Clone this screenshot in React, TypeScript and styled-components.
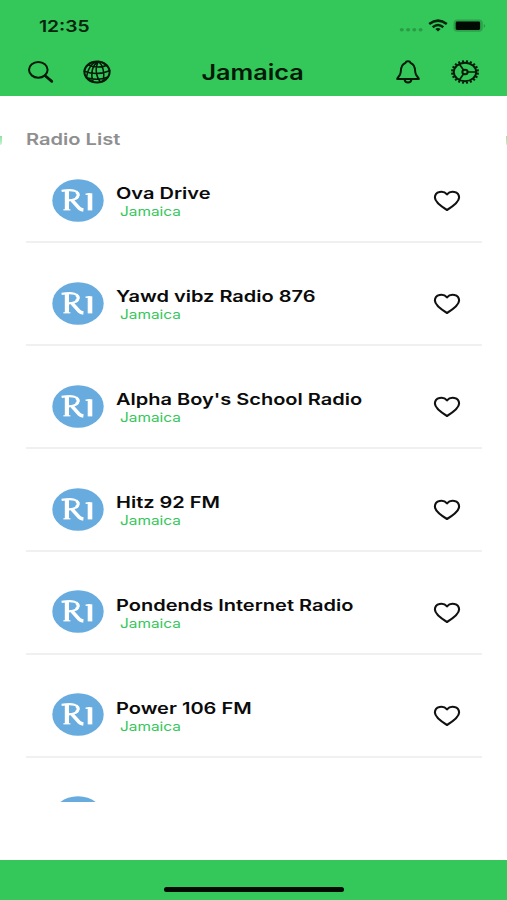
import React from "react";
import styled, { createGlobalStyle } from "styled-components";

const GlobalStyle = createGlobalStyle`
  * { box-sizing: border-box; }
  body {
    margin: 0;
    background: #fff;
    font-family: Inter, "Liberation Sans", sans-serif;
    color: #0b0b0b;
  }
`;

const Screen = styled.div`
  width: 507px;
  height: 900px;
  display: flex;
  flex-direction: column;
  overflow: hidden;
  background: #fff;
`;

const Header = styled.header`
  height: 96px;
  flex: none;
  background: #34c759;
  color: #04240c;
`;

const StatusBar = styled.div`
  height: 50px;
  padding: 2px 20px 0 39px;
  display: flex;
  align-items: center;
  justify-content: space-between;
`;

const Wide = styled.span<{ $scale?: number; $origin?: string }>`
  display: inline-block;
  white-space: nowrap;
  transform: scaleX(${(p) => p.$scale ?? 1.2});
  transform-origin: ${(p) => p.$origin ?? "left center"};
`;

const Clock = styled.div`
  font-size: 16px;
  line-height: 20px;
  font-weight: 600;
`;

const StatusIcons = styled.svg`
  display: block;
  width: 88px;
  height: 18px;
`;

const NavBar = styled.nav`
  height: 46px;
  padding: 0 27px 0 26px;
  display: grid;
  grid-template-columns: 100px 1fr 100px;
  align-items: center;
`;

const NavGroup = styled.div<{ $end?: boolean }>`
  display: flex;
  gap: ${(p) => (p.$end ? "27.5px" : "26px")};
  align-items: center;
  justify-content: ${(p) => (p.$end ? "flex-end" : "flex-start")};
`;

const NavIcon = styled.svg`
  display: block;
  flex: none;
  width: 30px;
  height: 26px;
  margin-top: -2px;
  fill: none;
  stroke: #031a08;
  stroke-width: 2;
  stroke-linecap: round;
  stroke-linejoin: round;
`;

const Title = styled.h1`
  margin: 0;
  font-size: 21px;
  line-height: 26px;
  font-weight: 600;
  text-align: center;
  color: #031a08;
`;

const Heading = styled.div`
  height: 62.4px;
  flex: none;
  display: flex;
  justify-content: space-between;
  padding-top: 33px;
`;

const SectionTitle = styled.h2`
  flex: 1;
  margin: 0 0 0 24px;
  font-size: 16px;
  line-height: 20px;
  font-weight: 600;
  color: #8f8f90;
`;

const EdgeSliver = styled.i<{ $right?: boolean }>`
  width: ${(p) => (p.$right ? "1px" : "2px")};
  height: 9px;
  margin-top: 7px;
  background: linear-gradient(#8be3a2, #c9f2d3);
  border-radius: ${(p) => (p.$right ? "1px 0 0 6px" : "0 0 6px 0")};
`;

const List = styled.ul`
  margin: 0 25px 0 26px;
  padding: 0;
  list-style: none;
  height: 643.2px;
  flex: none;
  overflow: hidden;
`;

const Row = styled.li`
  height: 85px;
  margin-bottom: 17.9px;
  padding: 1px 21px 0 26px;
  border-bottom: 2px solid #f0f0f0;
  display: flex;
  align-items: center;
`;

const Logo = styled.svg`
  display: block;
  flex: none;
  width: 52px;
  height: 43px;
  margin-right: 12px;
`;

const Info = styled.div`
  flex: 1;
  min-width: 0;
  padding: 3px 0 0 0.3px;
`;

const Name = styled.div`
  font-size: 16px;
  line-height: 21px;
  font-weight: 600;
`;

const Country = styled.div`
  margin-left: 4px;
  font-size: 12.5px;
  line-height: 16px;
  color: #34c759;
`;

const Heart = styled.svg`
  display: block;
  flex: none;
  width: 28px;
  height: 22px;
  margin-top: 2px;
  fill: none;
  stroke: #111;
  stroke-width: 2.1;
  stroke-linejoin: round;
`;

const Footer = styled.footer`
  margin-top: auto;
  height: 40px;
  background: #34c759;
  padding-top: 27px;
`;

const HomeBar = styled.div`
  width: 180px;
  height: 5px;
  margin: 0 auto;
  border-radius: 3px;
  background: #020a04;
`;

const stations = [
  "Ova Drive",
  "Yawd vibz Radio 876",
  "Alpha Boy's School Radio",
  "Hitz 92 FM",
  "Pondends Internet Radio",
  "Power 106 FM",
];

const teeth = Array.from({ length: 20 }, (_, i) => {
  const a = ((i + 0.5) / 20) * Math.PI * 2;
  const c = Math.cos(a);
  const s = Math.sin(a);
  return `M${15 + 11.8 * c} ${13 + 9.8 * s}L${15 + 14 * c} ${13 + 11.8 * s}`;
}).join("");

const SearchIcon = () => (
  <NavIcon viewBox="0 0 30 26">
    <ellipse cx="12.3" cy="10.8" rx="9.3" ry="7.9" />
    <path d="M19.2 16.8L25.8 22.4" strokeWidth="2.7" />
  </NavIcon>
);

const GlobeIcon = () => (
  <NavIcon viewBox="0 0 30 26">
    <ellipse cx="15" cy="13" rx="12.6" ry="10.4" />
    <path
      strokeWidth="1.5"
      d="M16.5 2.5C10 6 8.2 15.5 11.2 23M16.5 2.5C13 8 13.5 17 18.5 23M16.5 2.5C21 6 22.8 14 21.2 21.8M16.5 2.5C12 2.5 6 7 4.5 18.8M6 5.8C12 8.8 20 8.6 25 6.2M2.3 12.3C10 15.2 20 15 27.6 11.8M4.3 18.8C11 20.7 20 20.5 26 18"
    />
  </NavIcon>
);

const BellIcon = () => (
  <NavIcon viewBox="0 0 30 26">
    <path d="M4.2 20C4.2 18.2 7.4 17.4 7.7 13.2C7.9 8.4 8.6 5 12.4 4C13 1.8 17 1.8 17.6 4C21.4 5 22.1 8.4 22.3 13.2C22.6 17.4 25.8 18.2 25.8 20Z" />
    <path d="M11.6 20.6C12 24.3 18 24.3 18.4 20.6" />
  </NavIcon>
);

const GearIcon = () => (
  <NavIcon viewBox="0 0 30 26">
    <ellipse cx="15" cy="13" rx="11.2" ry="9.3" strokeWidth="1.9" />
    <path d={teeth} strokeWidth="2" strokeLinecap="butt" />
    <ellipse cx="15" cy="13" rx="2.6" ry="2.2" />
    <path strokeWidth="1.6" d="M17.8 13H26M13.5 11L9.5 5.2M13.5 15L9.5 20.8" />
  </NavIcon>
);

const StationLogo = () => (
  <Logo viewBox="0 0 52 43">
    <ellipse cx="26" cy="21.5" rx="25.7" ry="21.3" fill="#68acdf" />
    <g fill="none" stroke="#fff">
      <path d="M14.9 11.8V31" strokeWidth="4.2" />
      <path d="M9.6 11.9C15 11 19 10.8 22.4 11.7C29 13.8 27.6 20.8 16.4 21.3" strokeWidth="2.2" />
      <path d="M24.2 12.7C27 14.5 26.6 17.9 23.8 19.4" strokeWidth="3" />
      <path d="M11.4 30.8H18.4" strokeWidth="1.2" />
      <path d="M20 21.3L27.2 29.2Q28.6 30.7 31.4 31" strokeWidth="3.5" />
      <path d="M38 14.3V31.4" strokeWidth="4.6" />
      <path d="M33.6 15.2L38.4 14.9" strokeWidth="1.6" />
    </g>
  </Logo>
);

const StatusGlyphs = () => (
  <StatusIcons viewBox="0 0 88 18">
    <g fill="#2a9c46">
      {[2.8, 9.1, 15.3, 21.6].map((x) => (
        <ellipse key={x} cx={x} cy="12.8" rx="2" ry="1.8" />
      ))}
    </g>
    <g fill="none" stroke="#04240c" strokeWidth="2.5">
      <path d="M30.2 7Q39 0.3 47.8 7" />
      <path d="M33.7 10.2Q39 5.8 44.3 10.2" />
    </g>
    <path d="M36.3 12.1Q39 10 41.7 12.1L39 14.4Z" fill="#04240c" />
    <rect x="54.5" y="2.6" width="29.3" height="12.2" rx="3.8" fill="#2ba348" />
    <rect x="56.7" y="4.5" width="24.4" height="8.5" rx="1.4" fill="#020a04" />
    <path d="M84.8 7C86.7 7.5 86.7 10.3 84.8 10.8Z" fill="#2a9c46" />
  </StatusIcons>
);

export default function App() {
  return (
    <Screen>
      <GlobalStyle />
      <Header>
        <StatusBar>
          <Clock>
            <Wide>12:35</Wide>
          </Clock>
          <StatusGlyphs />
        </StatusBar>
        <NavBar>
          <NavGroup>
            <SearchIcon />
            <GlobeIcon />
          </NavGroup>
          <Title>
            <Wide $origin="center">Jamaica</Wide>
          </Title>
          <NavGroup $end>
            <BellIcon />
            <GearIcon />
          </NavGroup>
        </NavBar>
      </Header>
      <Heading>
        <EdgeSliver />
        <SectionTitle>
          <Wide $scale={1.255}>Radio List</Wide>
        </SectionTitle>
        <EdgeSliver $right />
      </Heading>
      <List>
        {stations.map((name) => (
          <Row key={name}>
            <StationLogo />
            <Info>
              <Name>
                <Wide $scale={1.25}>{name}</Wide>
              </Name>
              <Country>
                <Wide $scale={1.23}>Jamaica</Wide>
              </Country>
            </Info>
            <Heart viewBox="0 0 28 22">
              <path d="M14 20C8.4 16.6 1.9 12.4 1.9 7.6C1.9 1.2 10.4 0 14 4.4C17.6 0 26.1 1.2 26.1 7.6C26.1 12.4 19.6 16.6 14 20Z" />
            </Heart>
          </Row>
        ))}
        <Row>
          <StationLogo />
        </Row>
      </List>
      <Footer>
        <HomeBar />
      </Footer>
    </Screen>
  );
}
